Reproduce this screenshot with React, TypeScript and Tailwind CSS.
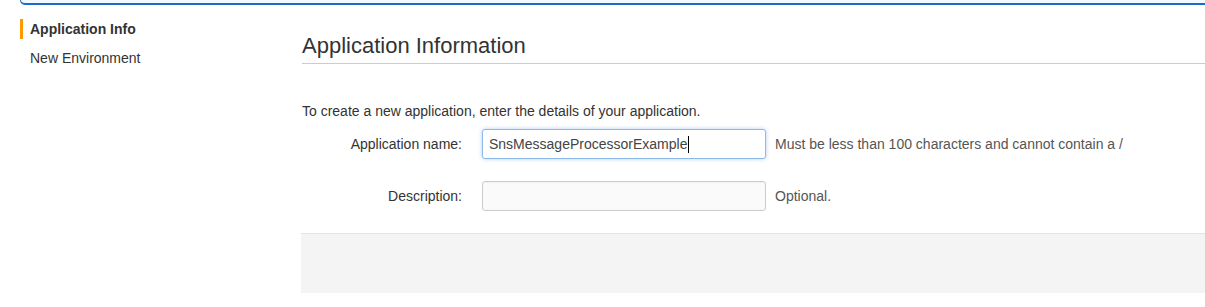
export default function App() {
  return (
    <div className="h-[307px] w-[1205px] overflow-hidden bg-white font-['Liberation_Sans',Arial,sans-serif] text-[#333]">
      {/* top banner edge */}
      <div className="ml-5 h-[5px] rounded-bl-[5px] border-b-2 border-l border-[#1a6bc4] bg-[#f1f8ff]" />

      <div className="flex">
        {/* Sidebar */}
        <aside className="w-[301px] shrink-0 pt-[14px]">
          <div className="ml-5 flex h-5 items-center border-l-[3px] border-[#f90] pl-[7px] text-[14px] font-bold text-[#333]">
            Application Info
          </div>
          <div className="ml-5 mt-[9px] flex h-5 items-center pl-[10px] text-[14px] text-[#333]">
            New Environment
          </div>
        </aside>

        {/* Main */}
        <main className="flex-1 pt-[29px]">
          <h2 className="ml-px border-b border-[#ccc] pb-[5px] text-[22px] leading-6 text-[#333]">
            Application Information
          </h2>

          <p className="ml-px mt-[39px] text-[14px] leading-4 text-[#333]">
            To create a new application, enter the details of your application.
          </p>

          <div className="ml-px mt-[10px] flex h-[30px] items-center">
            <label className="w-[160px] text-right text-[14px] text-[#333]">Application name:</label>
            <div className="ml-5 flex h-[30px] w-[284px] items-center rounded-[3px] border border-[#8db9e8] bg-white pl-[6px] text-[14px] text-[#444] shadow-[0_0_4px_rgba(90,150,230,0.45)]">
              SnsMessageProcessorExample
              <span className="ml-px inline-block h-[17px] w-px bg-black" />
            </div>
            <span className="ml-[9px] text-[14px] text-[#555]">
              Must be less than 100 characters and cannot contain a /
            </span>
          </div>

          <div className="ml-px mt-[22px] flex h-[30px] items-center">
            <label className="w-[160px] text-right text-[14px] text-[#333]">Description:</label>
            <div className="ml-5 h-[30px] w-[284px] rounded-[3px] border border-[#ccc] bg-[#fafafa] shadow-[inset_0_1px_1px_rgba(0,0,0,0.04)]" />
            <span className="ml-[9px] text-[14px] text-[#555]">Optional.</span>
          </div>

          <div className="mt-[22px] h-[60px] border-t border-[#e3e3e3] bg-[#f4f4f4]" />
        </main>
      </div>
    </div>
  )
}
